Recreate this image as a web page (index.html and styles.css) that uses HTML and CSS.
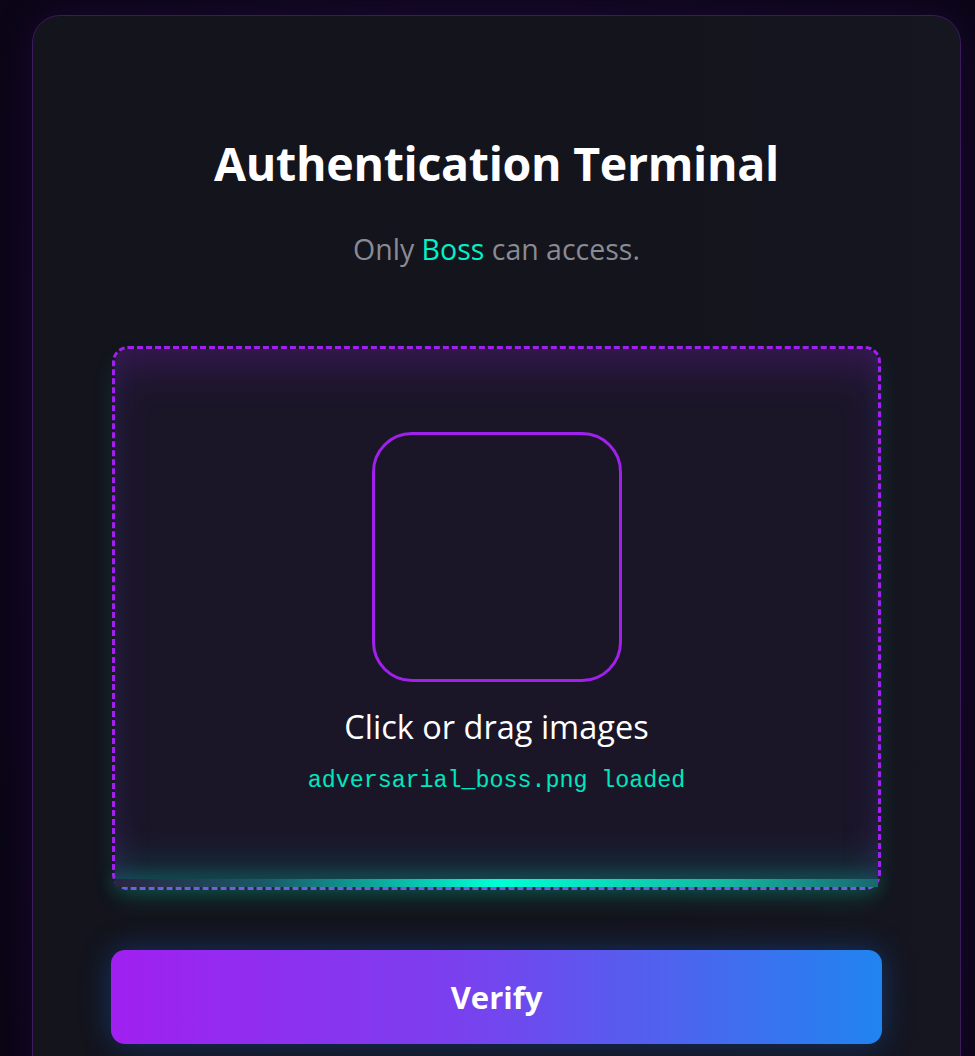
FILE: index.html
```html
<!DOCTYPE html>
<html lang="en">
<head>
<meta charset="utf-8">
<title>Authentication Terminal</title>
<link rel="stylesheet" href="styles.css">
</head>
<body>
<div class="page">
  <main class="card">
    <h1 class="title">Authentication Terminal</h1>
    <p class="subtitle">Only <span class="accent">Boss</span> can access.</p>
    <div class="dropzone">
      <div class="preview"></div>
      <div class="drop-label">Click or drag images</div>
      <div class="file-status">adversarial_boss.png loaded</div>
      <div class="scanbar"></div>
    </div>
    <button class="verify">Verify</button>
  </main>
</div>
</body>
</html>
```

FILE: styles.css
```css
* { box-sizing: border-box; }
html, body {
  margin: 0;
  height: 100%;
  overflow: hidden;
}
body {
  background: radial-gradient(ellipse at 50% 40%, #160a2a 0%, #0c0619 60%, #0a0514 100%);
  font-family: "Open Sans", "Noto Sans", sans-serif;
}
.page {
  padding: 15px 14px 0 32px;
}
.card {
  background: linear-gradient(90deg, #13141c 0%, #14141d 70%, #151620 100%);
  border: 1px solid #3b1a5e;
  border-radius: 28px;
  padding: 117px 78px 80px;
  min-height: 1200px;
  box-shadow: 0 0 40px rgba(90, 20, 160, 0.18);
}
.title {
  margin: 0;
  text-align: center;
  color: #ffffff;
  font-size: 46.5px;
  line-height: 60px;
  font-weight: 700;
  letter-spacing: -0.3px;
}
.subtitle {
  margin: 38px 0 0;
  text-align: center;
  color: #8a8a92;
  font-size: 28.5px;
  line-height: 36px;
}
.accent { color: #00f2c8; }
.dropzone {
  position: relative;
  margin: 79px 1px 0;
  border: 3px dashed #a020f0;
  border-bottom-color: #7b4fe6;
  border-radius: 16px;
  background: #1a1628;
  padding: 83px 0 91px;
  display: flex;
  flex-direction: column;
  align-items: center;
  box-shadow:
    inset 0 24px 44px -10px rgba(120, 30, 180, 0.32),
    inset 0 -40px 40px -20px rgba(0, 200, 180, 0.22),
    0 12px 26px -6px rgba(0, 220, 170, 0.2);
}
.preview {
  width: 250px;
  height: 250px;
  border: 3px solid #a020ec;
  border-radius: 40px;
  background: #1a1628;
}
.drop-label {
  margin-top: 25px;
  color: #ffffff;
  font-size: 32.5px;
  line-height: 40px;
}
.file-status {
  margin-top: 19px;
  color: #00e6bf;
  font-family: "Liberation Mono", "DejaVu Sans Mono", monospace;
  font-size: 23.3px;
  line-height: 30px;
}
.scanbar {
  position: absolute;
  left: 0;
  right: 0;
  bottom: 0;
  height: 8px;
  background: linear-gradient(90deg, #2a2440 0%, #1a5a68 20%, #00ffd4 50%, #14b8a0 80%, #1a6870 100%);
  box-shadow: 0 0 18px rgba(0, 240, 200, 0.35);
}
.verify {
  display: block;
  width: 100%;
  margin-top: 60px;
  height: 94px;
  border: none;
  border-radius: 14px;
  background: linear-gradient(90deg, #a020f0 0%, #7a40ee 45%, #4a66ee 75%, #2084f0 100%);
  color: #ffffff;
  font-family: "Open Sans", "Noto Sans", sans-serif;
  font-size: 31px;
  font-weight: 700;
  box-shadow: 0 0 30px rgba(30, 110, 240, 0.35);
}
```
